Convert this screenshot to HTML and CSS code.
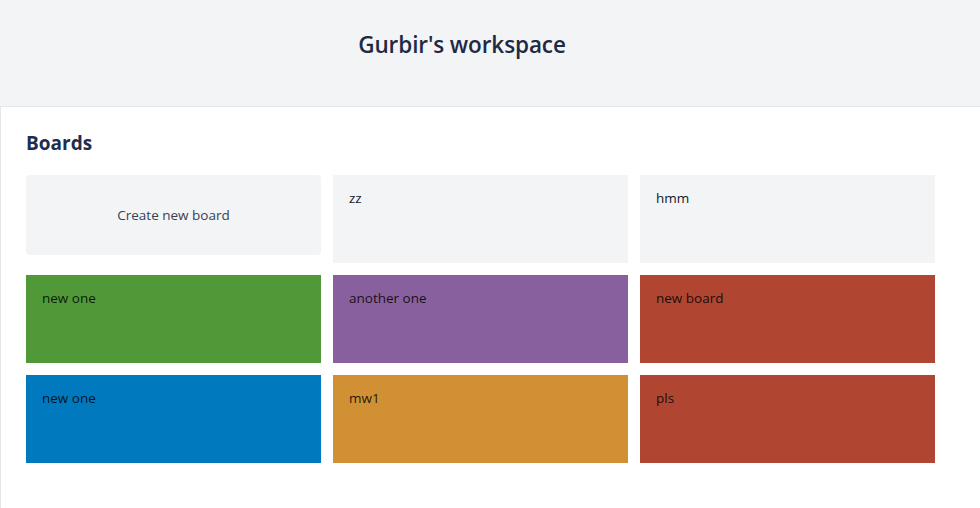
FILE: index.html
```html
<!DOCTYPE html>
<html>
<head>
<meta charset="utf-8">
<link rel="stylesheet" href="styles.css">
</head>
<body>
<header class="top">
  <h1 class="title">Gurbir's workspace</h1>
</header>
<main class="content">
  <h2 class="heading">Boards</h2>
  <div class="grid">
    <div class="card create">Create new board</div>
    <div class="card gray">zz</div>
    <div class="card gray">hmm</div>
    <div class="card green">new one</div>
    <div class="card purple">another one</div>
    <div class="card red">new board</div>
    <div class="card blue">new one</div>
    <div class="card orange">mw1</div>
    <div class="card red">pls</div>
  </div>
</main>
</body>
</html>
```
FILE: styles.css
```css
html, body {
  margin: 0;
  padding: 0;
  background: #ffffff;
  font-family: "Open Sans", "Noto Sans", sans-serif;
}
.top {
  height: 107px;
  box-sizing: border-box;
  background: #f3f4f6;
  border-bottom: 1px solid #e5e7eb;
  display: flex;
  align-items: center;
  justify-content: center;
  padding-right: 56px;
  padding-bottom: 17px;
}
.title {
  margin: 0;
  font-size: 22.5px;
  font-weight: 600;
  color: #1e2a44;
  letter-spacing: -0.1px;
}
.content {
  border-left: 1px solid #e5e7eb;
  min-height: 401px;
  box-sizing: border-box;
  padding: 22px 25px 0;
}
.heading {
  margin: 0 0 18px;
  font-size: 19px;
  line-height: 28px;
  font-weight: 700;
  color: #1e2d4f;
}
.grid {
  display: grid;
  grid-template-columns: repeat(3, 295px);
  grid-auto-rows: 88px;
  gap: 12px;
}
.card {
  box-sizing: border-box;
  padding: 13px 16px;
  font-size: 13.5px;
  line-height: 20px;
  color: rgba(0, 0, 0, 0.85);
}
.create {
  height: 80px;
  border-radius: 4px;
  background: #f3f4f6;
  color: #374151;
  display: flex;
  align-items: center;
  justify-content: center;
  padding: 0;
}
.gray { background: #f3f4f6; color: #111827; }
.green { background: #519839; }
.purple { background: #89609e; }
.red { background: #b04632; }
.blue { background: #0079bf; }
.orange { background: #d29034; }
```
